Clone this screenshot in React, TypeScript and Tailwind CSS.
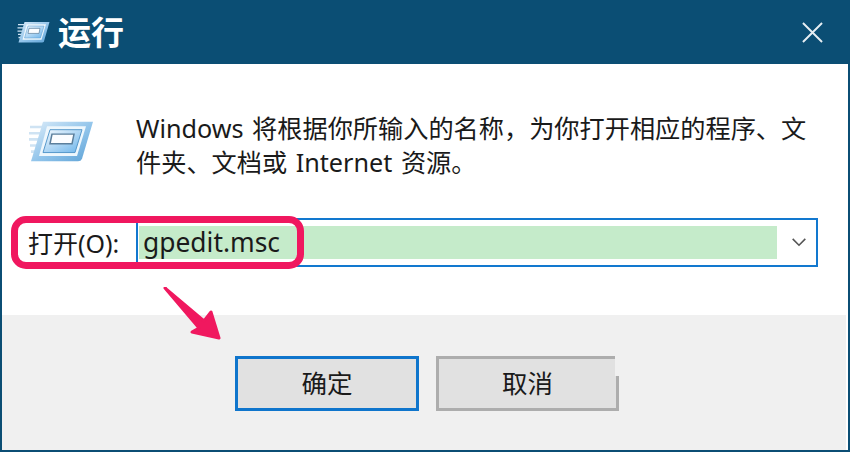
const RunIcon = ({ className }: { className: string }) => (
  <svg viewBox="0 0 66 50" preserveAspectRatio="none" className={className}>
    <defs>
      <linearGradient id="runFrame" x1="0" y1="0" x2="1" y2="1">
        <stop offset="0" stopColor="#dcecf9" />
        <stop offset="0.55" stopColor="#8fc3ea" />
        <stop offset="1" stopColor="#5da2d6" />
      </linearGradient>
      <linearGradient id="runInner" x1="0" y1="0" x2="1" y2="1">
        <stop offset="0" stopColor="#f4faff" />
        <stop offset="1" stopColor="#6cb4ea" />
      </linearGradient>
    </defs>
    <path d="M2 8h13M1 15h11M1 22h10M2 29h8M3 36h6" stroke="#cfe3f3" strokeWidth="3" />
    <path d="M15 2H65L54 44Q53 47 50 47H3Z" fill="url(#runFrame)" />
    <path d="M19 7H58L49 41H11Z" fill="#eef7fd" />
    <path d="M22 11H54L47 37H15Z" fill="url(#runInner)" stroke="#4f93c8" strokeWidth="1" />
    <path d="M24 16H46L44 27H22Z" fill="#fbfdff" stroke="#5b7f9c" strokeWidth="1.5" />
  </svg>
);

const App = () => {
  return (
    <div className="relative flex h-[452px] w-[850px] flex-col overflow-hidden bg-[#0b4e74] pb-[2px] pl-[2px] pr-[2px] font-['Noto_Sans','Noto_Sans_CJK_SC',sans-serif] text-[#1a1a1a]">
      {/* Title bar */}
      <div className="flex h-[64px] shrink-0 items-center text-white">
        <RunIcon className="ml-[15px] h-[23px] w-[33px]" />
        <span className="ml-[8px] text-[33px] font-bold leading-none">运行</span>
        <svg viewBox="0 0 22 22" className="ml-auto mr-[25px] mt-[1px] h-[21px] w-[21px]" fill="none" stroke="#e6eef3" strokeWidth="2">
          <path d="M1 1l20 20M21 1L1 21" />
        </svg>
      </div>

      {/* Message + input */}
      <div className="flex h-[251px] shrink-0 flex-col bg-white">
        <div className="flex">
          <RunIcon className="ml-[26px] mt-[56px] h-[44px] w-[66px] shrink-0" />
          <p className="ml-[42px] mt-[47px] w-[690px] text-[25.2px] leading-[34px] [word-spacing:2px]">
            Windows 将根据你所输入的名称，为你打开相应的程序、文件夹、文档或 Internet 资源。
          </p>
        </div>
        <div className="mt-[39px] flex items-center">
          <span className="ml-[26px] mt-[2px] w-[108px] text-[25px] leading-none">打开(O):</span>
          <div className="flex h-[49px] w-[682px] items-center border-2 border-[#1278cf] pl-[1px]">
            <div className="h-[33px] w-[638px] bg-[#c5ebca] pl-[4px] text-[26.4px] leading-[33px]">gpedit.msc</div>
            <svg viewBox="0 0 16 10" className="ml-[14px] h-[9px] w-[16px]" fill="none" stroke="#555555" strokeWidth="1.8">
              <path d="M1 1l7 7 7-7" />
            </svg>
          </div>
        </div>
      </div>

      {/* Buttons */}
      <div className="flex flex-1 items-start gap-[17px] border-r-2 border-white bg-[#f0f0f0] pl-[233px] pt-[41px]">
        <button className="flex h-[55px] w-[184px] items-center justify-center border-[3px] border-[#0f75cc] bg-[#e1e1e1] text-[25.5px]">确定</button>
        <button className="relative flex h-[55px] w-[183px] items-center justify-center border-[3px] border-[#adadad] bg-[#e1e1e1] text-[25.5px]">
          取消
          <span className="absolute right-[-3px] top-[-3px] h-[20px] w-[4px] bg-[#f0f0f0]" />
        </button>
      </div>

      {/* Annotations */}
      <div className="absolute left-[11px] top-[216px] h-[53px] w-[293px] rounded-[15px] border-[7px] border-[#f0175f]" />
      <svg viewBox="0 0 60 56" className="absolute left-[163px] top-[287px] h-[56px] w-[60px]">
        <path d="M2 1L41 34 48 25 56 51 29 45 36 41Z" fill="#f0185f" stroke="#f0185f" strokeWidth="3" strokeLinejoin="round" />
      </svg>
    </div>
  );
};

export default App;
